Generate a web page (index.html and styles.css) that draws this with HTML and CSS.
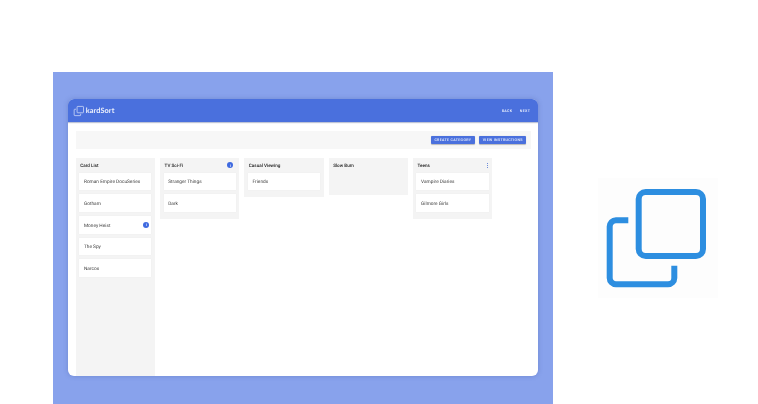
FILE: index.html
```html
<!DOCTYPE html>
<html lang="en">
<head>
<meta charset="utf-8">
<title>kardSort</title>
<link rel="stylesheet" href="styles.css">
</head>
<body>
<main class="page">
  <section class="hero">
    <div class="window">
      <header class="appbar">
        <div class="brand">
          <svg class="brand-icon" viewBox="0 0 120 120" aria-hidden="true">
            <rect x="40.7" y="14" width="64.3" height="64" rx="7"/>
            <path d="M30.3 42.3H18a6.3 6.3 0 0 0-6.3 6.3V100a6.3 6.3 0 0 0 6.3 6.3h52a6.3 6.3 0 0 0 6.3-6.3V87.7"/>
          </svg>
          <span class="brand-name">kardSort</span>
        </div>
        <nav class="appnav"><span>Back</span><span>Next</span></nav>
      </header>
      <div class="content">
        <div class="toolbar">
          <span class="btn btn-create">Create Category</span>
          <span class="btn btn-view">View Instructions</span>
        </div>
        <div class="board">
          <div class="column column-full">
            <div class="col-head"><span>Card List</span></div>
            <div class="card"><span>Roman Empire DocuSeries</span></div>
            <div class="card"><span>Gotham</span></div>
            <div class="card"><span>Money Heist</span><i class="badge">i</i></div>
            <div class="card"><span>The Spy</span></div>
            <div class="card"><span>Narcos</span></div>
          </div>
          <div class="column">
            <div class="col-head"><span>TV Sci-Fi</span><i class="badge">i</i></div>
            <div class="card"><span>Stranger Things</span></div>
            <div class="card"><span>Dark</span></div>
          </div>
          <div class="column">
            <div class="col-head"><span>Casual Viewing</span></div>
            <div class="card"><span>Friends</span></div>
          </div>
          <div class="column column-empty">
            <div class="col-head"><span>Slow Burn</span></div>
          </div>
          <div class="column">
            <div class="col-head"><span>Teens</span><b class="kebab"><u></u><u></u><u></u></b></div>
            <div class="card"><span>Vampire Diaries</span></div>
            <div class="card"><span>Gilmore Girls</span></div>
          </div>
        </div>
      </div>
    </div>
  </section>
  <aside class="logo-tile">
    <svg class="logo-icon" viewBox="0 0 120 120" aria-hidden="true">
      <rect x="40.7" y="14" width="64.3" height="64" rx="7"/>
      <path d="M30.3 42.3H18a6.3 6.3 0 0 0-6.3 6.3V100a6.3 6.3 0 0 0 6.3 6.3h52a6.3 6.3 0 0 0 6.3-6.3V87.7"/>
    </svg>
  </aside>
</main>
</body>
</html>
```

FILE: styles.css
```css
* { box-sizing: border-box; }

html, body { margin: 0; height: 100%; background: #fff; overflow: hidden; }

body {
  font-family: Roboto, "Liberation Sans", sans-serif;
  text-rendering: geometricPrecision;
}

.page {
  display: flex;
  align-items: flex-start;
  width: 758px;
  height: 404px;
  padding: 72px 0 0 53.3px;
}

.hero {
  flex: none;
  width: 500px;
  height: 332px;
  padding: 27.3px 15px 28.5px;
  background: #88a2ec;
}

.window {
  display: flex;
  flex-direction: column;
  height: 100%;
  overflow: hidden;
  border-radius: 6px;
  background: #fff;
  box-shadow: 0 0 5px rgba(50, 70, 140, .28);
  filter: blur(.3px);
}

.appbar {
  flex: none;
  display: flex;
  align-items: center;
  justify-content: space-between;
  height: 23px;
  padding: 0 8px 0 4.4px;
  background: #4a70dd;
  box-shadow: 0 1px 1px rgba(40, 60, 120, .3);
}

.brand { display: flex; align-items: center; gap: 1px; }

.brand-icon { width: 12px; height: 12px; }

.brand-icon rect, .brand-icon path {
  fill: none;
  stroke: #dfe6fa;
  stroke-width: 7;
}

.brand-name {
  font-family: Lato, sans-serif;
  font-size: 7.3px;
  font-weight: 700;
  letter-spacing: .1px;
  color: #edf1fc;
}

.appnav {
  display: flex;
  gap: 7.5px;
  padding-top: 1px;
  font-size: 3.7px;
  font-weight: 500;
  letter-spacing: .3px;
  text-transform: uppercase;
  color: #eef2fd;
}

.content {
  flex: 1;
  min-height: 0;
  display: flex;
  flex-direction: column;
  gap: 9px;
  padding: 8.7px 7.4px 0;
}

.toolbar {
  flex: none;
  display: flex;
  justify-content: flex-end;
  align-items: center;
  gap: 4.6px;
  height: 18.3px;
  padding-right: 4.7px;
  background: #f7f7f7;
}

.btn {
  display: flex;
  align-items: center;
  justify-content: center;
  height: 8.6px;
  border-radius: 1px;
  background: #4a70dd;
  box-shadow: 0 .5px 1px rgba(0, 0, 0, .25);
  font-size: 3.6px;
  font-weight: 500;
  letter-spacing: .32px;
  text-transform: uppercase;
  color: #f2f5fe;
  white-space: nowrap;
}

.btn-create { width: 43.6px; }
.btn-view { width: 47px; }

.board {
  flex: 1;
  min-height: 0;
  display: flex;
  align-items: flex-start;
  gap: 4.9px;
}

.column {
  flex: none;
  width: 79.4px;
  display: flex;
  flex-direction: column;
  gap: 4.1px;
  padding: 0 3.6px 6.6px;
  background: #f4f4f4;
}

.column-full { align-self: stretch; }

.column-empty { min-height: 37px; }

.col-head {
  display: flex;
  align-items: center;
  justify-content: space-between;
  height: 14.4px;
  margin-bottom: -4.1px;
  padding: 0 2.6px 0 1px;
  font-size: 4.6px;
  font-weight: 500;
  color: #222;
}

.card {
  display: flex;
  align-items: center;
  justify-content: space-between;
  height: 17.6px;
  padding: 0 2.2px 0 4.7px;
  background: #fff;
  box-shadow: 0 0 1px rgba(0, 0, 0, .06);
  font-size: 4.75px;
  color: #3d3d3d;
}

.col-head span, .card span { padding-top: 2.4px; }

.badge {
  flex: none;
  display: flex;
  align-items: center;
  justify-content: center;
  width: 6px;
  height: 6px;
  border-radius: 50%;
  background: #3f6ae0;
  font-size: 4px;
  font-style: normal;
  font-weight: 700;
  color: #dfe7fb;
}

.kebab {
  display: flex;
  flex-direction: column;
  gap: .8px;
  margin-right: -2px;
}

.kebab u { width: 1px; height: 1px; background: #6d8bd8; }

.logo-tile {
  flex: none;
  width: 120px;
  height: 120px;
  margin: 106px 0 0 44.7px;
  background: #fdfdfd;
}

.logo-icon { display: block; width: 120px; height: 120px; }

.logo-icon rect, .logo-icon path {
  fill: none;
  stroke: #2d8ee0;
  stroke-width: 6;
}
```
